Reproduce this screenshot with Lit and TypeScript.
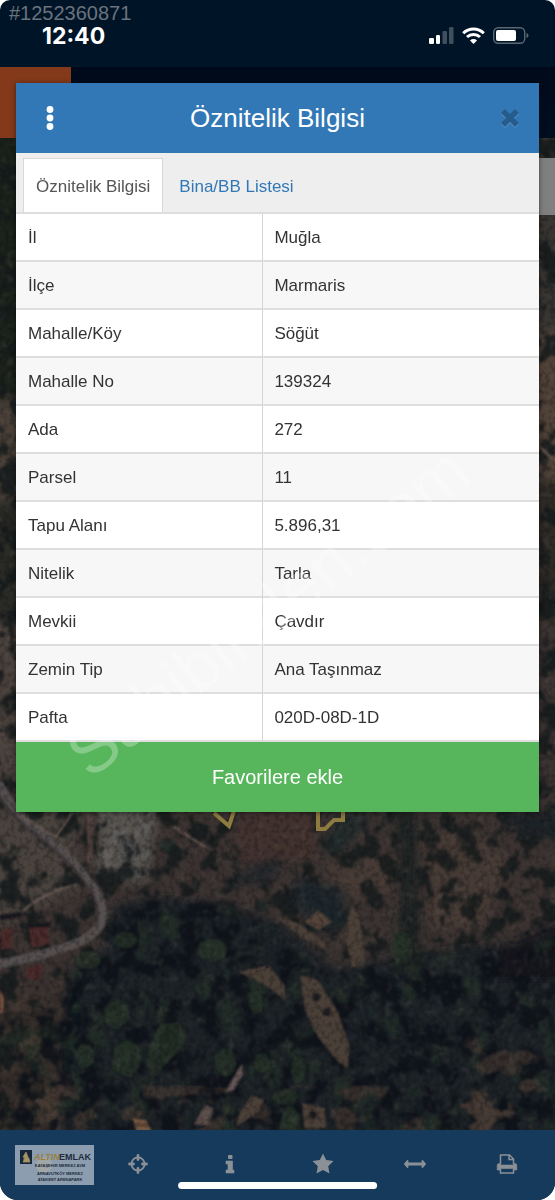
import { LitElement, html, svg, css } from "lit";
import { customElement, state } from "lit/decorators.js";

const ROWS: [string, string][] = [
  ["İl", "Muğla"],
  ["İlçe", "Marmaris"],
  ["Mahalle/Köy", "Söğüt"],
  ["Mahalle No", "139324"],
  ["Ada", "272"],
  ["Parsel", "11"],
  ["Tapu Alanı", "5.896,31"],
  ["Nitelik", "Tarla"],
  ["Mevkii", "Çavdır"],
  ["Zemin Tip", "Ana Taşınmaz"],
  ["Pafta", "020D-08D-1D"],
];

/** Noise layer: one flat colour whose opacity follows a thresholded turbulence. */
const noise = (id: string, freq: string, octaves: number, seed: number, rgb: number[], gain: number, bias: number, blur = 0.8) => svg`
  <filter id=${id} x="0" y="0" width="100%" height="100%" color-interpolation-filters="sRGB">
    <feTurbulence type="fractalNoise" baseFrequency=${freq} numOctaves=${octaves} seed=${seed} />
    <feColorMatrix values=${`0 0 0 0 ${rgb[0] / 255} 0 0 0 0 ${rgb[1] / 255} 0 0 0 0 ${rgb[2] / 255} ${gain} 0 0 0 ${bias}`} />
    <feGaussianBlur stdDeviation=${blur} result="pattern" />
    <feGaussianBlur in="SourceGraphic" stdDeviation="3" result="area" />
    <feComposite in="pattern" in2="area" operator="in" />
  </filter>`;

@customElement("satellite-map")
export class SatelliteMap extends LitElement {
  static styles = css`
    :host { display: block; }
    .map { display: block; width: 100%; height: 100%; }
  `;

  render() {
    const forest = "M66 975 105 950 112 915 150 900 170 895 225 905 265 925 290 950 340 975 380 960 420 955 480 950 555 935V1140H-10V1010H70Z";
    return html`
      <svg class="map" viewBox="0 138 555 992" preserveAspectRatio="xMidYMid slice" aria-hidden="true">
        <defs>
          ${noise("grain", "0.2 0.18", 2, 4, [12, 12, 16], 4, -1.8, 0.6)}
          ${noise("speck", "0.14 0.12", 3, 11, [104, 96, 88], 6, -3.5)}
          ${noise("shrub", "0.05 0.045", 3, 21, [22, 27, 28], 9, -4.5, 1.2)}
          ${noise("shade", "0.05 0.04", 4, 7, [12, 16, 24], 7, -3.3)}
          ${noise("leaf", "0.045 0.035", 4, 33, [38, 52, 41], 7, -3.7, 1.5)}
          ${noise("soil", "0.03 0.04", 4, 52, [76, 62, 54], 9, -5, 1)}
          ${noise("rock", "0.16 0.1", 3, 15, [112, 109, 109], 7, -3.5)}
          <filter id="soft" x="-10%" y="-10%" width="120%" height="120%"><feGaussianBlur stdDeviation="5" /></filter>
          <filter id="edge" x="-10%" y="-10%" width="120%" height="120%"><feGaussianBlur stdDeviation="1.2" /></filter>
        </defs>
        <rect y="138" width="555" height="992" fill="#3b3331" />
        <g filter="url(#soft)">
          <path d="M-10 130H100V400H-10Z" fill="#1b231f" />
          <path d="M-10 400H100V500H-10Z" fill="#484139" />
          <path d="M-10 500H100V620H-10Z" fill="#2a2a25" />
          <path d="M-10 620H100V780H-10Z" fill="#4b433e" />
          <path d="M450 130H565V330H450Z" fill="#393430" />
          <path d="M450 330H565V480H450Z" fill="#514338" />
          <path d="M450 480H565V620H450Z" fill="#2e2b28" />
          <path d="M-10 810H85L75 850 88 885 55 900-10 930Z" fill="#4a423d" />
          <path d="M100 800H160L146 885 96 872Z" fill="#565250" />
          <path d="M330 860 395 852 400 880 375 905 330 885Z" fill="#463a36" />
          <path d="M420 835 470 830 510 860 480 930 430 925Z" fill="#463a36" />
          <path d="M-10 1000 60 990 70 1080 40 1140H-10Z" fill="#352e2b" />
        </g>
        <rect x="-20" y="118" width="595" height="1032" filter="url(#shrub)" opacity=".85" />
        <g filter="url(#soft)">
          <path d="M236 806H314V858L240 862Z" fill="#42332f" />
          <path d="M72 965 105 950 115 905 160 898 225 905 285 925 340 975 345 1140H60L75 1050Z" fill="#1c2227" />
          <path d="M340 965 420 955 565 935V1140H330Z" fill="#1b2126" />
          <path d="M395 800 415 815 418 940 430 970 392 975 402 900Z" fill="#1b2423" />
          <path d="M294 880 340 888 350 925 320 930 296 905Z" fill="#1c2529" />
          <path d="M232 880 252 868 280 855V872L252 885Z" fill="#20252a" />
          <path d="M335 815 372 812 345 850 325 852Z" fill="#22292b" />
          <path d="M500 812H565V840L520 835Z" fill="#1f2428" />
          <path d="M500 950 565 920V980H490Z" fill="#15191f" />
          <path d="M75 975 85 1020 72 1080 60 1070 63 1000Z" fill="#11131f" />
        </g>
        <path d=${forest} filter="url(#leaf)" opacity=".6" />
        <path d=${forest} filter="url(#shade)" opacity=".8" />
        <path d="M-10 1085H565V1140H-10Z" filter="url(#soil)" opacity=".6" />
        <path d="M-10 970H65V1140H-10ZM450 1040H565V1140H450Z" filter="url(#soil)" opacity=".6" />
        <g filter="url(#edge)" fill="#293829" opacity=".65">
          <ellipse cx="167" cy="845" rx="9" ry="7" fill="#1b2926" />
          <ellipse cx="262" cy="906" rx="8" ry="7" fill="#1a2525" /><ellipse cx="212" cy="950" rx="15" ry="11" />
          <ellipse cx="126" cy="940" rx="11" ry="8" /><ellipse cx="88" cy="960" rx="13" ry="9" /><ellipse cx="402" cy="948" rx="11" ry="16" />
          <path d="M104 1008 112 998 126 1002 130 1018 118 1030 106 1024ZM114 1048 128 1040 142 1048 140 1066 130 1078 114 1070Z" />
          <path d="M150 1045 160 1025 178 1022 188 1035 180 1050 164 1066 152 1080 146 1062Z" /><ellipse cx="85" cy="1056" rx="9" ry="12" />
          <ellipse cx="256" cy="1002" rx="7" ry="11" /><ellipse cx="226" cy="1062" rx="10" ry="14" />
          <ellipse cx="285" cy="1097" rx="13" ry="8" /><ellipse cx="262" cy="1063" rx="8" ry="10" /><ellipse cx="290" cy="1118" rx="8" ry="12" /><ellipse cx="298" cy="1070" rx="7" ry="14" />
        </g>
        <path d="M98 800H160L146 880 98 868Z" filter="url(#rock)" opacity=".5" />
        <path d="M-10 130H565V1140H-10Z" filter="url(#speck)" opacity=".2" />
        <g filter="url(#edge)" fill="#4c3f39">
          <path d="M300 975 318 980 337 1010 349 1045 348 1068 338 1062 318 1037 305 1010Z" />
          <path d="M268 965 285 986 285 1001 270 988 252 978 238 972Z" />
          <path d="M344 930 352 905 360 918 365 965 352 968Z" />
          <path d="M275 915 300 924 325 944 326 950 300 936Z" />
          <path d="M305 922 318 910 332 922 318 930Z" fill="#54443a" />
          <path d="M302 1103 325 1108 326 1128H304Z" />
          <path d="M236 1127 238 1116 243 1108 252 1095 264 1100 258 1112Z" />
          <path d="M132 1118 146 1120 152 1132H137Z" fill="#74573f" />
          <path d="M225 1092 235 1075 242 1064 243 1074 234 1090Z" fill="#635452" />
          <path d="M194 1124 205 1105 213 1108 208 1126Z" fill="#5d504c" />
          <path d="M0 990 4 996 3 1012 0 1014Z" fill="#7b5340" />
        </g>
        <g fill="#1c1c20" filter="url(#edge)">
          <circle cx="316" cy="997" r="4" /><circle cx="327" cy="1012" r="4" /><circle cx="313" cy="1115" r="4" />
        </g>
        <g fill="none" stroke-linecap="round" filter="url(#edge)">
          <path d="M0 786Q14 813 42 834 72 857 94 889 111 915 96 930 82 948 0 964" stroke="#554f4f" stroke-width="9" />
          <path d="M0 797Q14 820 42 840 72 862 90 890 103 912 92 925" stroke="#3a3435" stroke-width="3" />
          <path d="M20 815 56 837 72 813M22 912Q45 891 76 885" stroke="#6c5c54" stroke-width="2" />
          <path d="M174 827 205 847" stroke="#6f5d56" stroke-width="2" />
          <path d="M90 812V860" stroke="#5d4a41" stroke-width="6" opacity=".7" />
          <path d="M540 447 560 466" stroke="#625348" stroke-width="3" />
        </g>
        <g filter="url(#edge)">
          <path d="M29 927 48 926 49 944 31 948ZM26 968 44 964 40 980 26 978ZM1 930 13 928 12 948 1 950Z" fill="#4b2b2a" />
          <path d="M0 918 22 914M28 925H50" stroke="#18151c" stroke-width="5" />
        </g>
        <g fill="#1c1c20">${Array.from({ length: 30 }, (_, i) => svg`<circle cx=${252 + (i % 6) * 5} cy=${937 + Math.floor(i / 6) * 7 + (i % 2) * 2} r="1.5" opacity=".6" />`)}</g>
        <path d="M-10 130H565V1140H-10Z" filter="url(#grain)" opacity=".25" />
        <g fill="none" stroke="#8d7b40" stroke-width="4">
          <path d="M214 813 229 826 235 808" />
          <path d="M318 808V829H325L334 820H343V808" />
        </g>
      </svg>`;
  }
}

@customElement("app-root")
export class AppRoot extends LitElement {
  @state() private tab = 0;

  static styles = css`
    :host {
      display: block;
      font-family: "Liberation Sans", Arial, sans-serif;
      background: #fff;
    }
    * { box-sizing: border-box; }
    button {
      margin: 0;
      padding: 0;
      border: 0;
      background: none;
      font: inherit;
      color: inherit;
    }
    svg { display: block; }
    .screen {
      position: relative;
      display: flex;
      flex-direction: column;
      min-height: 100vh;
      overflow: hidden;
      border-radius: 10px 10px 18px 18px;
      background: #001427;
    }
    .status {
      display: flex;
      justify-content: space-between;
      height: 67px;
      padding: 3px 26px 0 9px;
    }
    .listing { color: #6a737d; font-size: 20px; line-height: 20px; }
    .time {
      padding-left: 33px;
      color: #fff;
      font: 700 23px/26px Inter, sans-serif;
    }
    .indicators { display: flex; align-items: center; gap: 8px; height: 64px; }
    .appbar { height: 71px; background: linear-gradient(#000a1a, #000e20); }
    .menu { display: block; width: 71px; height: 71px; background: #83391a; }
    .ground { position: relative; flex: 1; min-height: 400px; }
    .map { position: absolute; inset: 0; }
    .layer {
      position: absolute;
      top: 20px;
      right: 0;
      width: 48px;
      height: 57px;
      background: #7f7f7f;
    }
    .dialog {
      position: absolute;
      top: 83px;
      left: 16px;
      right: 16px;
      background: #fff;
      box-shadow: 0 1px 5px rgba(0, 0, 0, 0.5);
    }
    .head {
      display: grid;
      grid-template-columns: 68px 1fr 58px;
      align-items: center;
      height: 70px;
      background: #3278b6;
      color: #fff;
    }
    .head button { display: grid; place-items: center; height: 100%; }
    .title { margin: 0; padding-right: 10px; font-size: 26px; font-weight: 400; text-align: center; }
    .tabs {
      display: flex;
      align-items: flex-end;
      height: 61px;
      padding-left: 7px;
      border-bottom: 2px solid #ddd;
      background: #eee;
    }
    .tab {
      height: 54px;
      padding: 2px 12px 0;
      border: 1px solid transparent;
      border-bottom: 0;
      color: #3278b6;
      font-size: 17px;
    }
    .tab + .tab { margin-left: 3px; }
    .tab.active { border-color: #d8d8d8; background: #fff; color: #555; }
    .facts { width: 100%; border-collapse: separate; border-spacing: 0; table-layout: fixed; }
    .facts th,
    .facts td {
      height: 48px;
      padding: 2px 12px 0;
      border-bottom: 2px solid #dedede;
      color: #333;
      font-size: 17px;
      font-weight: 400;
      text-align: left;
    }
    .facts th { width: 47.3%; border-right: 1px solid #d4d4d4; }
    .facts td { padding-left: 11px; }
    .facts tr:nth-child(even) { background: #f7f7f7; }
    button.favorite {
      display: block;
      width: 100%;
      height: 70px;
      background: #57b65b;
      color: #fff;
      font-size: 20px;
    }
    .nav {
      position: relative;
      display: grid;
      grid-template-columns: repeat(6, 1fr);
      height: 70px;
      padding: 0 2px 2px 0;
      background: #163a5b;
      color: #8b9097;
    }
    .nav button { display: grid; place-items: center; }
    .home {
      position: absolute;
      bottom: 11px;
      left: 50%;
      width: 36%;
      height: 7px;
      border-radius: 4px;
      background: #fff;
      transform: translateX(-50%);
    }
    .brand {
      position: absolute;
      left: 15px;
      bottom: 15px;
      width: 79px;
      height: 40px;
      background: #8d9db0;
    }
    .watermark {
      position: absolute;
      top: 400px;
      left: 0;
      width: 100%;
      height: 400px;
      pointer-events: none;
    }
  `;

  render() {
    return html`
      <div class="screen">
        <header class="status">
          <div>
            <div class="listing">#1252360871</div>
            <div class="time">12:40</div>
          </div>
          <div class="indicators">
            <svg width="25" height="17" viewBox="0 0 25 17" fill="#fff" aria-label="Signal">
              <rect y="11" width="5" height="6" rx="1.2" /><rect x="7" y="8" width="4" height="9" rx="1.2" />
              <rect x="13.500" y="4" width="4.500" height="13" rx="1.2" opacity=".25" /><rect x="20" width="4.500" height="17" rx="1.2" opacity=".25" />
            </svg>
            <svg width="23" height="17" viewBox="0 0 23 17" fill="none" stroke="#fff" stroke-width="3" aria-label="Wi-Fi">
              <path d="M1.200 6.200a14.700 14.700 0 0 1 20.600 0" /><path d="M5 10a9.400 9.400 0 0 1 13 0" />
              <path d="M11.500 17 8 13.500a5 5 0 0 1 7 0Z" fill="#fff" stroke="none" />
            </svg>
            <svg width="36" height="17" viewBox="0 0 36 17" aria-label="Battery">
              <rect x=".7" y=".7" width="31" height="15.600" rx="4.500" fill="none" stroke="#5b6773" stroke-width="1.400" />
              <rect x="3" y="3" width="20" height="11" rx="2" fill="#fff" /><path d="M33.500 6v5q2-.7 2-2.500t-2-2.500Z" fill="#5b6773" />
            </svg>
          </div>
        </header>
        <div class="appbar"><button class="menu" aria-label="Menu"></button></div>
        <main class="ground">
          <satellite-map class="map"></satellite-map>
          <button class="layer" aria-label="Layers"></button>
        </main>
        <nav class="nav">
          <button aria-label="Search"><svg width="24" height="24" viewBox="0 0 24 24" fill="none" stroke="currentColor" stroke-width="3"><circle cx="10" cy="10" r="7" /><path d="m15 15 7 7" /></svg></button>
          <button aria-label="Location">
            <svg width="20" height="20" viewBox="0 0 20 20" fill="none" stroke="currentColor">
              <circle cx="10" cy="10" r="6.600" stroke-width="1.800" /><path d="M10 1.500v4M10 14.500v4M1.500 10h4M14.500 10h4" stroke-width="2.800" stroke-linecap="round" />
            </svg>
          </button>
          <button aria-label="Information">
            <svg width="10" height="20" viewBox="0 0 10 20" fill="currentColor"><rect x="3" y="1" width="4.500" height="4" rx="1" /><path d="M1 7h6.500v9H9v3H1v-3h2v-6H1Z" stroke="currentColor" stroke-linejoin="round" stroke-width=".6" /></svg>
          </button>
          <button aria-label="Favorites">
            <svg width="22" height="22" viewBox="0 0 22 22" fill="currentColor"><path d="m11 .5 3.200 6.600 7.300 1-5.300 5.100 1.300 7.300-6.500-3.500-6.500 3.500 1.300-7.300L.5 8.100l7.300-1Z" /></svg>
          </button>
          <button aria-label="Measure">
            <svg width="24" height="10" viewBox="0 0 24 10" fill="none" stroke="currentColor" stroke-linecap="round" stroke-linejoin="round"><path d="M3 5h18" stroke-width="2.800" /><path d="M4.500 2 2 5l2.500 3ZM19.500 2 22 5l-2.500 3Z" fill="currentColor" stroke-width="1.800" /></svg>
          </button>
          <button aria-label="Print">
            <svg width="22" height="20" viewBox="0 0 22 20" fill="none" stroke="currentColor" stroke-width="1.500">
              <path d="M4.500 10V1h9l4 4v5M13 1v4.500h4.500M4.500 15v4h13v-4" /><path d="M3 9.500h1.500V11h13V9.500H19q1.800 0 1.800 2V16h-3.300v-1.500h-13V16H1.200v-4.500q0-2 1.800-2Z" fill="currentColor" stroke-width=".6" />
            </svg>
          </button>
          <div class="brand">
            <svg width="79" height="40" viewBox="0 0 79 40" font-family="Liberation Sans, sans-serif" fill="#202b3b">
              <circle cx="29" cy="20" r="8" fill="#a9aaa2" opacity=".7" />
              <rect x="5" y="5" width="12" height="14" fill="#17273b" />
              <path d="m8 17 2-4-2-1 3-5 4 10ZM9 10l5 4M8 14h7" fill="#a39665" stroke="#a39665" stroke-width=".7" />
              <text x="19" y="15" font-size="9" font-style="italic" font-weight="700" fill="#97803f">ALTIN</text>
              <text x="44" y="15" font-size="9" font-weight="700">EMLAK</text>
              <text x="45" y="22" font-size="4" font-weight="700" text-anchor="middle">KAYAŞEHİR MERKEZ AVM</text>
              <text x="45" y="30" font-size="4" font-weight="700" text-anchor="middle">ARNAVUTKÖY MERKEZ</text>
              <text x="45" y="36" font-size="4" font-weight="700" text-anchor="middle">ATAKENT ARENAPARK</text>
            </svg>
          </div>
          <div class="home"></div>
        </nav>

        <section class="dialog" role="dialog" aria-labelledby="dialog-title">
          <div class="head">
            <button aria-label="Options">
              <svg width="8" height="24" viewBox="0 0 8 24" fill="#fff"><circle cx="4" cy="3.500" r="3.400" /><circle cx="4" cy="12" r="3.400" /><circle cx="4" cy="20.500" r="3.400" /></svg>
            </button>
            <h1 class="title" id="dialog-title">Öznitelik Bilgisi</h1>
            <button aria-label="Close">
              <svg width="20" height="20" viewBox="0 0 20 20" fill="none" stroke-width="5.500"><path d="m3 4 14 14M17 4 3 18" stroke="#5c93c4" /><path d="m3 3 14 14M17 3 3 17" stroke="#265c8b" /></svg>
            </button>
          </div>
          <div class="tabs" role="tablist">
            ${["Öznitelik Bilgisi", "Bina/BB Listesi"].map((label, i) => html`
              <button role="tab" class="tab ${this.tab === i ? "active" : ""}" aria-selected=${this.tab === i} @click=${() => (this.tab = i)}>${label}</button>`)}
          </div>
          <table class="facts">
            <tbody>
              ${ROWS.map(([name, value]) => html`<tr><th scope="row">${name}</th><td>${value}</td></tr>`)}
            </tbody>
          </table>
          <button class="favorite">Favorilere ekle</button>
        </section>

        <svg class="watermark" viewBox="0 400 555 400" aria-hidden="true">
          <text transform="translate(90 780) rotate(-38)" font-family="Liberation Sans, sans-serif" font-size="68" fill="#fff" fill-opacity=".28">Sahibinden.com</text>
        </svg>
      </div>`;
  }
}
